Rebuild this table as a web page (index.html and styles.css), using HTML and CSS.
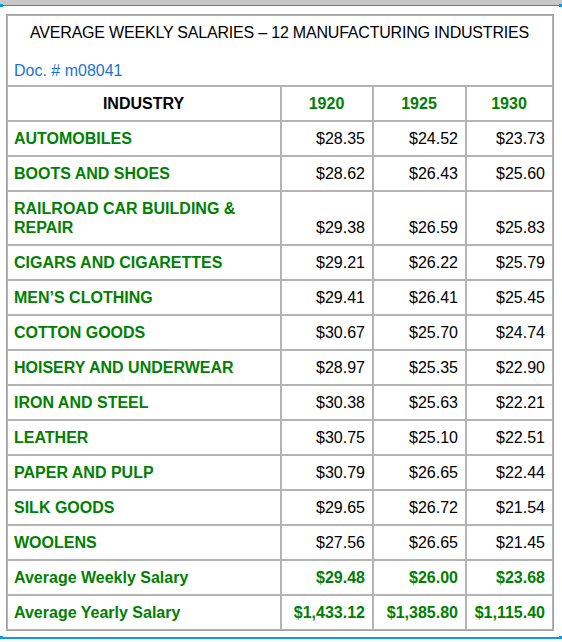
FILE: index.html
```html
<!DOCTYPE html>
<html>
<head>
<meta charset="utf-8">
<link rel="stylesheet" href="styles.css">
</head>
<body>
<div class="topbar"></div>
<div class="rule rule-top"></div>
<table class="salaries">
  <colgroup>
    <col class="c-ind">
    <col class="c-y1">
    <col class="c-y2">
    <col class="c-y3">
  </colgroup>
  <tr>
    <td class="title-cell" colspan="4">
      <div class="title">AVERAGE WEEKLY SALARIES – 12 MANUFACTURING INDUSTRIES</div>
      <div class="doc">Doc. # m08041</div>
    </td>
  </tr>
  <tr>
    <th class="h-ind">INDUSTRY</th>
    <th class="h-year">1920</th>
    <th class="h-year">1925</th>
    <th class="h-year">1930</th>
  </tr>
  <tr><td class="ind">AUTOMOBILES</td><td class="num">$28.35</td><td class="num">$24.52</td><td class="num">$23.73</td></tr>
  <tr><td class="ind">BOOTS AND SHOES</td><td class="num">$28.62</td><td class="num">$26.43</td><td class="num">$25.60</td></tr>
  <tr><td class="ind">RAILROAD CAR BUILDING &amp;<br>REPAIR</td><td class="num">$29.38</td><td class="num">$26.59</td><td class="num">$25.83</td></tr>
  <tr><td class="ind">CIGARS AND CIGARETTES</td><td class="num">$29.21</td><td class="num">$26.22</td><td class="num">$25.79</td></tr>
  <tr><td class="ind">MEN’S CLOTHING</td><td class="num">$29.41</td><td class="num">$26.41</td><td class="num">$25.45</td></tr>
  <tr><td class="ind">COTTON GOODS</td><td class="num">$30.67</td><td class="num">$25.70</td><td class="num">$24.74</td></tr>
  <tr><td class="ind">HOISERY AND UNDERWEAR</td><td class="num">$28.97</td><td class="num">$25.35</td><td class="num">$22.90</td></tr>
  <tr><td class="ind">IRON AND STEEL</td><td class="num">$30.38</td><td class="num">$25.63</td><td class="num">$22.21</td></tr>
  <tr><td class="ind">LEATHER</td><td class="num">$30.75</td><td class="num">$25.10</td><td class="num">$22.51</td></tr>
  <tr><td class="ind">PAPER AND PULP</td><td class="num">$30.79</td><td class="num">$26.65</td><td class="num">$22.44</td></tr>
  <tr><td class="ind">SILK GOODS</td><td class="num">$29.65</td><td class="num">$26.72</td><td class="num">$21.54</td></tr>
  <tr><td class="ind">WOOLENS</td><td class="num">$27.56</td><td class="num">$26.65</td><td class="num">$21.45</td></tr>
  <tr><td class="ind">Average Weekly Salary</td><td class="num total">$29.48</td><td class="num total">$26.00</td><td class="num total">$23.68</td></tr>
  <tr><td class="ind">Average Yearly Salary</td><td class="num total">$1,433.12</td><td class="num total">$1,385.80</td><td class="num total">$1,115.40</td></tr>
</table>
<div class="rule rule-bottom"></div>
</body>
</html>
```

FILE: styles.css
```css
html, body {
  margin: 0;
  padding: 0;
  background: #ffffff;
}
body {
  font-family: "Liberation Sans", Arial, sans-serif;
  font-size: 16px;
  color: #000;
  width: 562px;
}
.topbar {
  height: 5px;
  background: #c8c8c8;
}
.rule {
  position: relative;
  height: 1px;
  background: #0a9af5;
}
.rule::before,
.rule::after {
  content: "";
  position: absolute;
  top: -1px;
  width: 3px;
  height: 3px;
  background: #0a9af5;
}
.rule::before { left: 0; }
.rule::after { right: 0; }
.rule-top {
  margin-bottom: 8px;
}
.rule-bottom {
  margin-top: 6px;
  height: 2px;
}
.salaries {
  margin-left: 6px;
  width: 548px;
  table-layout: fixed;
  border-collapse: separate;
  border-spacing: 0;
  border: 1px solid #a0a0a0;
}
.c-ind { width: 274px; }
.c-y1 { width: 92px; }
.c-y2 { width: 93px; }
.c-y3 { width: 87px; }
.salaries td,
.salaries th {
  border: 1px solid #b4b4b4;
  padding: 7px 7px 7px 6px;
  line-height: 19px;
  vertical-align: bottom;
}
.salaries .title-cell {
  padding: 7px 7px 5px 6px;
}
.title {
  text-align: center;
  margin-bottom: 19px;
  letter-spacing: -0.2px;
}
.doc {
  text-align: left;
  color: #1a73d2;
}
.h-ind {
  font-weight: bold;
  text-align: center;
  color: #000;
}
.h-year {
  font-weight: bold;
  text-align: center;
  color: #008000;
}
.ind {
  font-weight: bold;
  color: #008000;
  text-align: left;
}
.num {
  text-align: right;
}
.total {
  font-weight: bold;
  color: #008000;
}
```
